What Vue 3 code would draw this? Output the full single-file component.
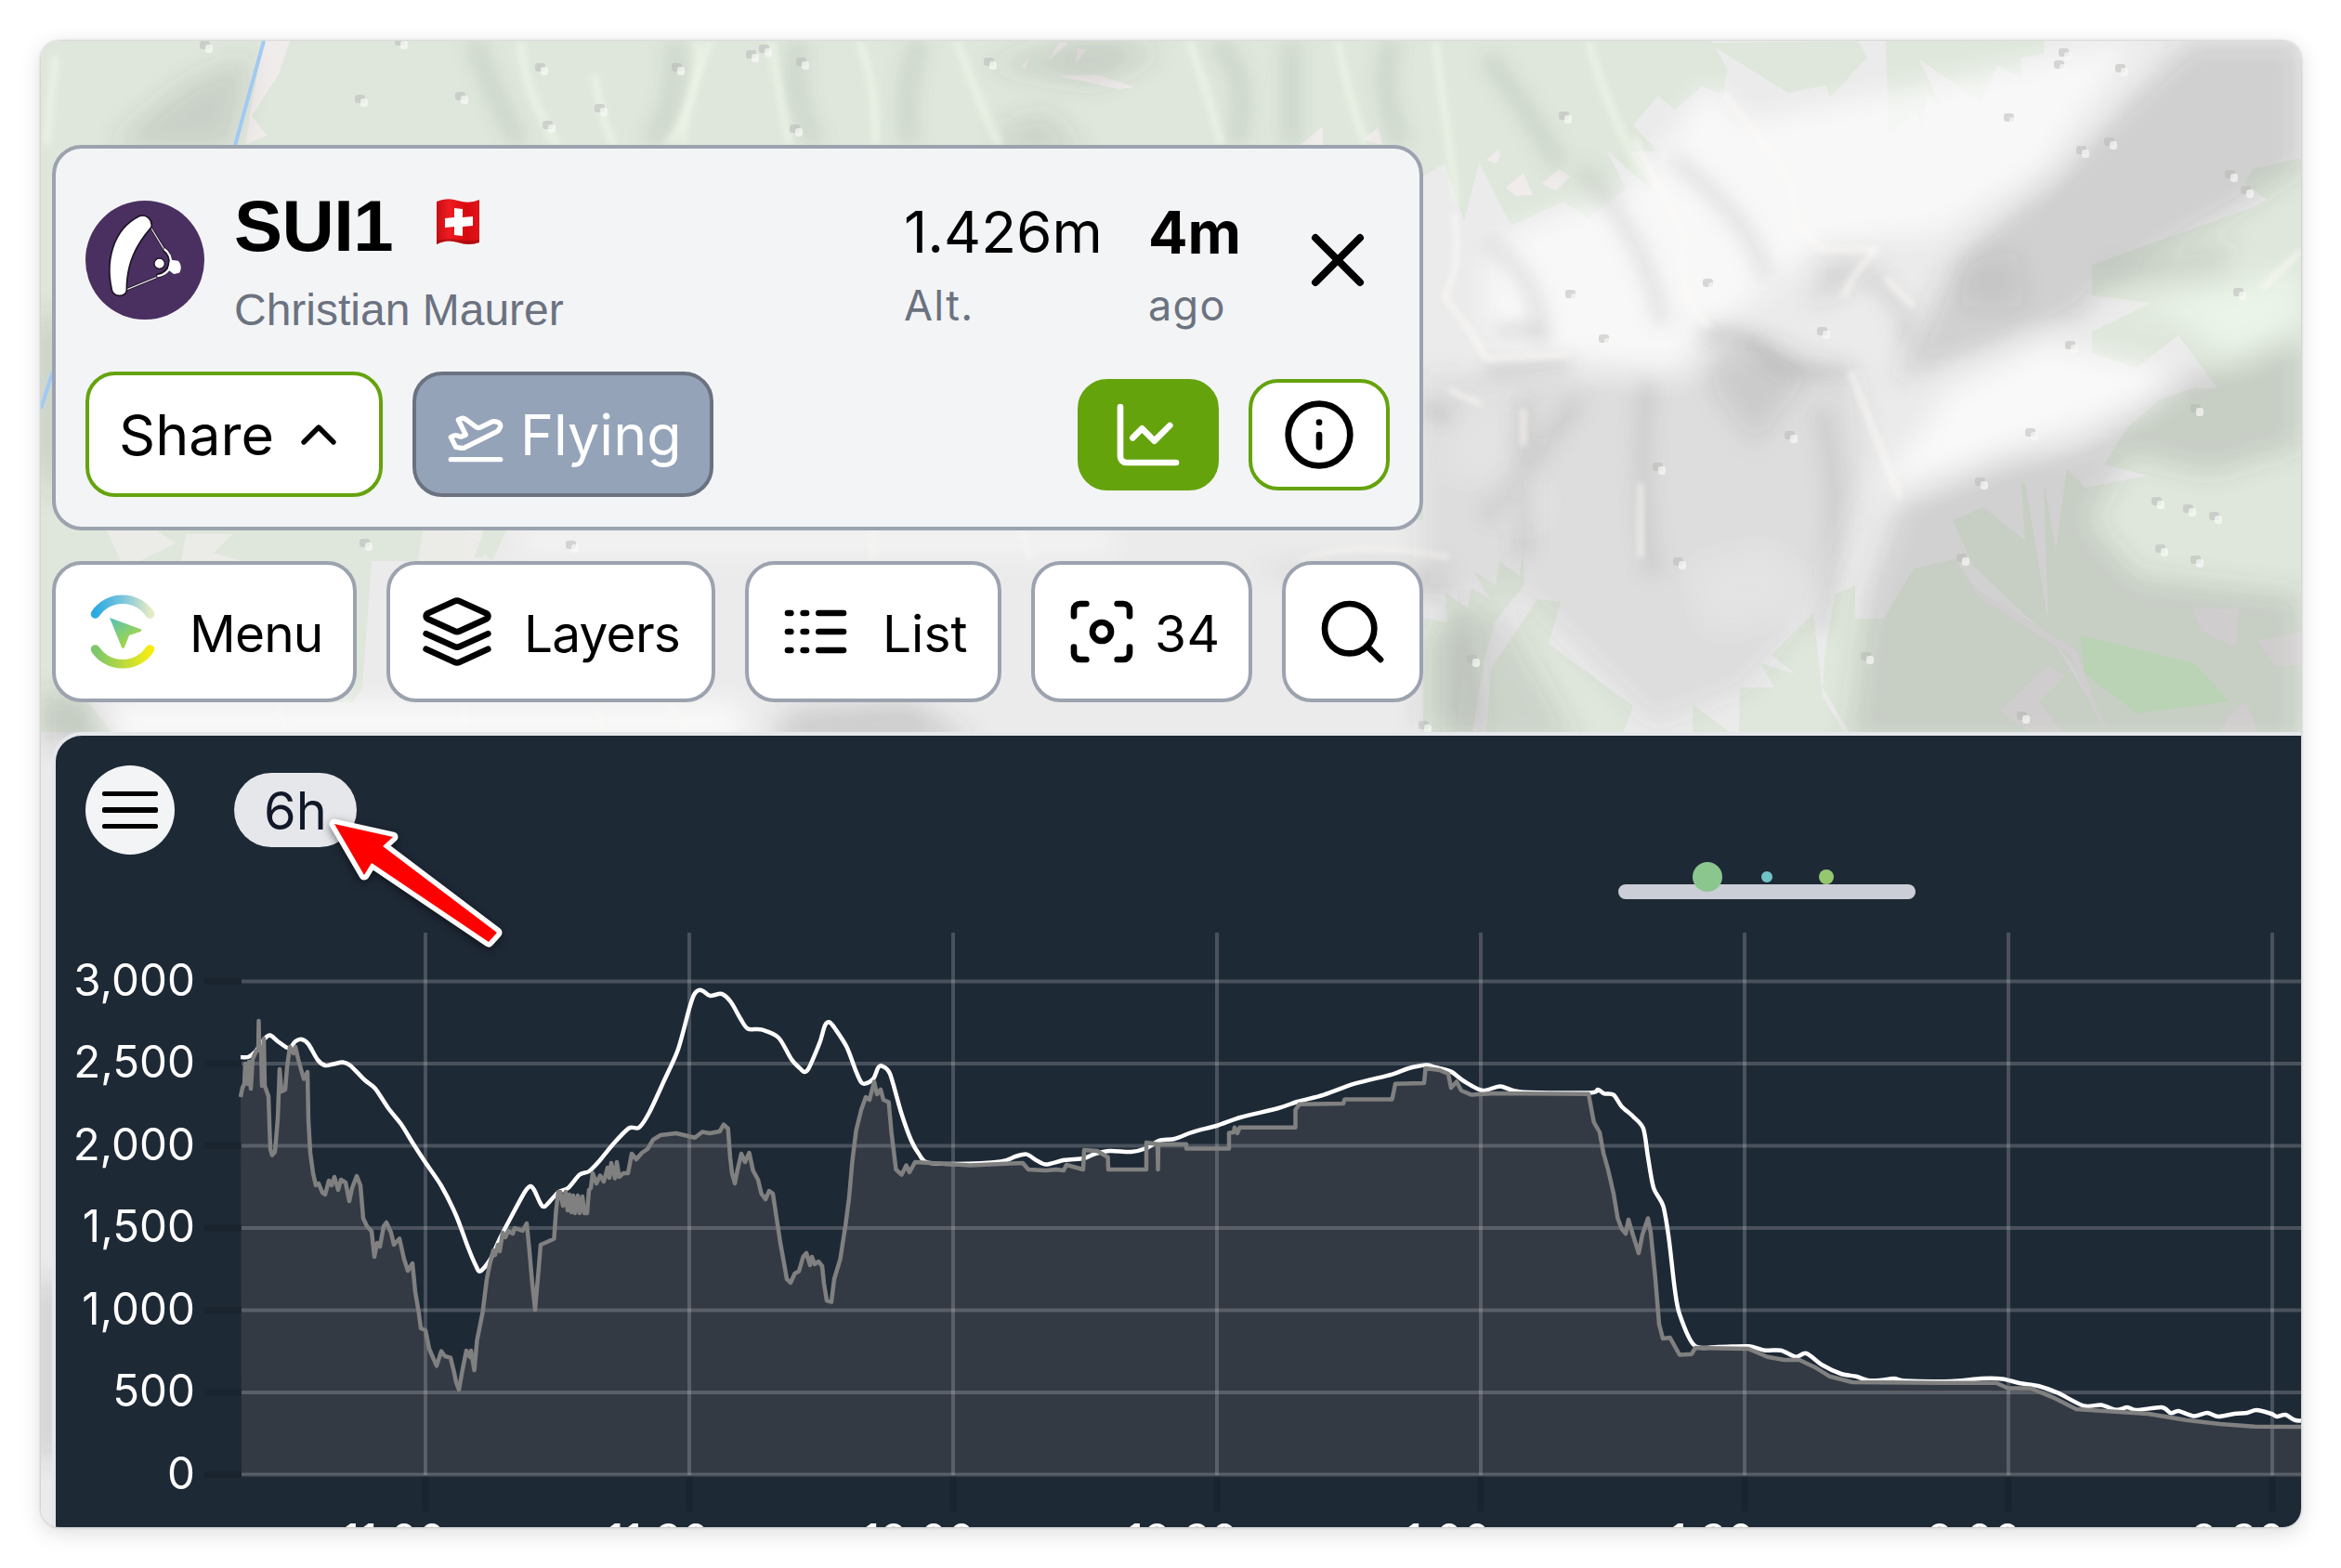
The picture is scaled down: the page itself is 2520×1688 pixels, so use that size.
<template>
  <div class="frame">
    <svg class="map" viewBox="44 44 2433 1600" preserveAspectRatio="none">
      <defs>
        <filter id="soft" x="-20%" y="-20%" width="140%" height="140%"><feGaussianBlur stdDeviation="14" /></filter>
        <filter id="soft-md" x="-20%" y="-20%" width="140%" height="140%"><feGaussianBlur stdDeviation="9" /></filter>
        <filter id="soft-sm" x="-20%" y="-20%" width="140%" height="140%"><feGaussianBlur stdDeviation="3" /></filter>
      </defs>
      <rect x="44" y="44" width="2433" height="1600" fill="#ebebeb" />

      <!-- 森林 -->
      <g fill="#dfe7dc">
        <path d="M44 44H1842L1860 75 1848 118 1858 90 1850 100 1832 93 1803 118 1785 103 1758 135 1785 163 1755 163 1778 205 1730 162 1750 204 1709 235 1683 217 1627 243 1592 175 1576 238 1555 176 1532 190V560H44Z" />
        <path d="M44 560H505L500 590 535 575 520 600 470 604H400L390 740 380 756H44ZM520 571H545L530 604 515 590Z" />
        <path d="M1838 46 1925 100 1966 92 1970 105 2010 62 2000 44ZM2030 44 2033 145 2062 122 2070 137 2074 100 2090 115 2064 60V44ZM2064 62 2132 110 2150 70 2176 84V62L2200 58V44H2060Z" />
        <path d="M2477 170 2425 182 2416 197 2440 215 2420 225 2252 285V318L2316 326 2252 357V380L2300 396 2345 361 2387 418H2360L2325 430 2290 460 2265 500 2312 512 2245 525 2225 505 2213 592 2200 520 2205 670 2180 520 2176 520 2180 582 2135 546 2102 560 2125 610 2210 690 2235 720 2270 788H2477Z" />
        <path d="M1532 665 1558 670 1556 638 1580 655 1584 633 1604 645 1586 615 1610 630 1614 604 1636 620 1639 595 1641 630 1610 668 1598 710 1585 788H1532ZM1655 645 1680 648 1667 693 1758 760 1748 788H1600L1605 720ZM1872 788 1873 740H1910L1895 714 1932 725 1907 705 1952 660 1962 750 1985 788ZM1990 788 1962 740 1965 700 1975 640 1997 630V666H2028L2060 612 2105 602 2130 640 2210 690 2270 788ZM1822 788V758L1862 788Z" />
        <path d="M44 756H95L120 788H44Z" />
      </g>
      <g fill="#efeceb">
        <path d="M284 44H312L300 80 271 125 287 146 264 156 270 120Z" />
        <path d="M110 560 152 560 190 585 150 604H130ZM200 575H250L230 595 260 604H195ZM455 571H520L510 604H450Z" opacity="0.7" />
        <path d="M1621 202 1640 186 1650 210 1632 211ZM1660 198 1678 182 1690 190 1675 205ZM1600 172 1612 162 1616 166 1610 176ZM1140 82 1180 80 1222 94 1205 96ZM1400 156 1424 136V156ZM1468 150 1484 137 1488 156ZM1100 72 1108 60 1104 74ZM1128 66 1140 46H1150ZM1158 68 1160 52 1170 54Z" />
      </g>
      <path d="M2240 684 2362 714 2400 755 2300 768 2244 725Z" fill="#cfeec9" />
      <g fill="#e9e6e6">
        <path d="M2205 716 2223 728 2195 755 2220 788H2185L2153 765ZM2360 655H2410L2407 697 2370 680ZM2430 690 2477 680V715L2450 718ZM2400 770 2418 755 2430 788H2390Z" />
        <path d="M2104 603 2125 632 2235 700 2248 735 2265 788 2240 735 2228 705 2130 643Z" />
      </g>

      <!-- 山体阴影 -->
      <g filter="url(#soft)">
        <g fill="#fcfcfc">
          <path d="M1600 260 1760 200 1840 90 1880 130 2300 44 2200 180 2090 250 1960 265 1850 350 1800 400 1600 370Z" opacity="0.75" />
          <path d="M2020 530 2100 420 2200 370 2340 400 2310 430 2200 470Z" opacity="0.8" />
          <path d="M2280 330 2477 290V350L2400 385 2340 340Z" fill="#f0faec" opacity="0.7" />
          <path d="M120 756H800V800H120Z" opacity="0.8" />
          <path d="M560 571H1200V595H560Z" opacity="0.6" />
          <path d="M1830 620 1900 600 1940 640 1850 670ZM1620 520 1660 540 1640 560ZM1560 500 1620 420 1610 500Z" opacity="0.5" />
        </g>
        <g fill="#4a4a4a">
          <path d="M2360 44H2477V180L2400 230 2270 300 2240 340 2130 380 2040 410 2070 350 2110 270 2210 190 2290 110Z" opacity="0.17" />
          <path d="M1530 405 1820 400 1900 370 2000 400 2010 520 1960 640 1880 740 1780 780 1640 640 1530 640Z" opacity="0.09" />
          <path d="M2045 540 2160 490 2240 480 2340 410 2477 360V480L2380 510 2290 490 2250 560 2300 620 2477 640V800H1990L2010 640Z" opacity="0.16" />
          <path d="M1820 350 1890 355 1950 400 1890 480 1850 430Z" opacity="0.11" />
          <path d="M1960 275 2025 272 2010 290 1950 330Z" opacity="0.16" />
          <path d="M2110 280 2170 270 2180 330 2110 330Z" opacity="0.08" />
          <path d="M2260 290 2400 260 2400 300 2270 315Z" opacity="0.12" />
          <path d="M1340 610H1560V800H1700L1620 660Z" opacity="0.12" />
          <path d="M850 765 980 755 1050 800H830Z" opacity="0.2" />
          <path d="M150 130 200 90 270 60 250 160H120Z" opacity="0.15" />
          <path d="M44 340 60 340 60 540 44 500Z" opacity="0.25" />
          <path d="M1060 70 1180 40 1250 55 1180 90Z" opacity="0.16" />
          <path d="M1080 130 1130 120 1170 170H1080Z" opacity="0.12" />
          <path d="M44 745 90 750 130 800H44Z" opacity="0.18" />
          <path d="M1530 690 1580 650 1600 788H1530Z" opacity="0.12" />
          <path d="M44 1380H60V1570H44Z" opacity="0.28" />
        </g>
      </g>
      <g filter="url(#soft-md)" fill="none" stroke-width="22">
        <g stroke="#7f897f" opacity="0.16">
          <path d="M510 44Q530 100 560 156M725 44Q735 100 700 156M990 44Q970 100 980 156M1310 44Q1350 90 1330 156M860 44Q850 110 880 156M1500 44Q1480 90 1510 156M1600 60Q1640 110 1680 180M1390 44V156" />
        </g>
        <g stroke="#808080" opacity="0.14">
          <path d="M1700 180Q1770 250 1790 350M1800 170Q1890 240 1900 300M1600 260Q1660 300 1660 370M2010 300Q2060 330 2050 370M1640 430V600M1775 410Q1760 500 1780 620M1700 430 1600 560M1960 440Q1990 560 1960 680" />
        </g>
        <g stroke="#707070" opacity="0.2" stroke-width="14">
          <path d="M1532 435Q1545 450 1560 445M1610 355H1660M1600 400 1690 392M1835 360Q1880 355 1900 380T1990 400" />
        </g>
      </g>
      <g filter="url(#soft-sm)" fill="none">
        <g stroke="#eef6ea" stroke-width="9">
          <path v-for="d in ridges" :key="d" :d="d" opacity="0.6" />
        </g>
        <g stroke="#fffbf8" stroke-width="5" opacity="0.75">
          <path d="M1855 100Q1895 150 1920 180Q1935 220 1935 240L1960 268H2020Q1990 300 1985 320M1760 150 1790 210 1812 250Q1805 320 1840 352M1992 400 2045 535M1565 230Q1575 280 1555 320Q1580 350 1600 386L1690 382M2030 300 2060 330M2435 310 2477 270M1766 520V600M1640 440V480M1560 420 1595 435" />
          <path d="M1560 600Q1450 580 1400 604M940 571V604M1100 571 1110 604M500 760V788M640 756 650 788M300 760 310 788M720 756 740 788" opacity="0.7" />
        </g>
      </g>

      <g fill="none" stroke="#a1c9f4" stroke-width="4">
        <path d="M284 44 252 160M57 400 44 440" />
      </g>
      <g v-for="(p, i) in bumps" :key="i">
        <rect :x="p[0] - 7" :y="p[1] - 6" width="11" height="9" rx="3" fill="#b4b8b3" opacity="0.5" />
        <rect :x="p[0] - 1" :y="p[1] - 2" width="8" height="9" rx="3" fill="#f8faf7" opacity="0.7" />
      </g>
    </svg>

    <div class="content">
      <section class="card">
        <header class="card-head">
          <svg class="avatar" viewBox="276 648 384 384">
            <circle cx="468" cy="840" r="192" fill="#4a3060" />
            <path d="M489 738 530 805M410 935 505 896" stroke="#1c1424" stroke-width="9" fill="none" />
            <path d="M489 738 530 805M410 935 505 896" stroke="#e4e0e8" stroke-width="4" fill="none" />
            <path d="M452 697C472 692 494 708 489 734C440 790 408 850 409 940C402 960 372 960 362 940C340 850 360 742 452 697Z" fill="#fff" stroke="#1c1424" stroke-width="5" />
            <path d="M528 804C560 826 560 880 506 892" stroke="#1c1424" stroke-width="14" fill="none" />
            <path d="M530 804C564 826 560 884 508 892" stroke="#fff" stroke-width="7" fill="none" />
            <circle cx="515" cy="851" r="17" fill="#fff" stroke="#1c1424" stroke-width="4" />
            <path d="M552 842 574 845Q586 860 578 878L562 882 546 870Z" fill="#fff" stroke="#fff" stroke-width="6" stroke-linejoin="round" />
          </svg>
          <div class="pilot">
            <div class="pilot-name">
              <span class="code">SUI1</span>
              <svg class="flag" viewBox="0 0 48 52">
                <defs>
                  <linearGradient id="flag-red" x1="0" x2="1">
                    <stop offset="0" stop-color="#c90f14" />
                    <stop offset="0.3" stop-color="#ee1c22" />
                    <stop offset="0.7" stop-color="#d80a0f" />
                    <stop offset="1" stop-color="#e0141a" />
                  </linearGradient>
                </defs>
                <path d="M1 4Q12-1 24 3T47 2V48Q36 52 24 48T1 50Z" fill="url(#flag-red)" />
                <path d="M1 46Q12 43 24 45T47 45V48Q36 52 24 48T1 50Z" fill="#8a0a0e" opacity="0.5" />
                <path d="M20 11 29 12V21L40 20V30L29 31V41L20 40V31L10 32V22L20 21Z" fill="#fff" />
              </svg>
            </div>
            <div class="pilot-full">Christian Maurer</div>
          </div>
          <div class="stat stat-alt">
            <div class="stat-value">1.426m</div>
            <div class="stat-label">Alt.</div>
          </div>
          <div class="stat stat-ago">
            <div class="stat-value bold">4m</div>
            <div class="stat-label">ago</div>
          </div>
          <button class="close">
            <svg class="icon close-icon" viewBox="0 0 24 24"><path d="M18 6 6 18M6 6l12 12" /></svg>
          </button>
        </header>
        <div class="actions">
          <button class="btn share">
            <span>Share</span>
            <svg class="icon icon-sm" viewBox="0 0 24 24"><path d="m18 15-6-6-6 6" /></svg>
          </button>
          <button class="btn flying">
            <svg class="icon icon-sm" viewBox="0 0 24 24">
              <path d="M2 22h20" />
              <path d="M6.36 17.4 4 17l-2-4 1.1-.55a2 2 0 0 1 1.8 0l.17.1a2 2 0 0 0 1.8 0L8 12 5 6l.9-.45a2 2 0 0 1 2.09.2l4.02 3a2 2 0 0 0 2.1.2l4.19-2.06a2.41 2.41 0 0 1 1.73-.17L21 7a1.4 1.4 0 0 1 .87 1.99l-.38.76c-.23.46-.6.84-1.07 1.08L7.58 17.2a2 2 0 0 1-1.22.18Z" />
            </svg>
            <span>Flying</span>
          </button>
          <button class="square filled">
            <svg class="icon" viewBox="0 0 24 24"><path d="M3 3v16a2 2 0 0 0 2 2h16" /><path d="m19 9-5 5-4-4-3 3" /></svg>
          </button>
          <button class="square">
            <svg class="icon" viewBox="0 0 24 24"><circle cx="12" cy="12" r="10" /><path d="M12 16v-4M12 8h.01" /></svg>
          </button>
        </div>
      </section>

      <nav class="toolbar">
        <button class="tool menu">
          <svg class="logo" viewBox="0 0 80 80">
            <defs>
              <linearGradient id="logo-top" x1="0" x2="1"><stop offset="0" stop-color="#29abe2" /><stop offset="0.5" stop-color="#7cc4de" /><stop offset="1" stop-color="#e3ebc4" /></linearGradient>
              <linearGradient id="logo-bottom" x1="0" x2="1"><stop offset="0" stop-color="#7ac76c" /><stop offset="1" stop-color="#f7ec13" /></linearGradient>
              <linearGradient id="logo-arrow" x1="0" x2="0.7" y2="1"><stop offset="0" stop-color="#52c1b8" /><stop offset="1" stop-color="#b4d936" /></linearGradient>
            </defs>
            <path d="M10.5 21A35.5 35.5 0 0 1 69.5 21" fill="none" stroke="url(#logo-top)" stroke-width="9.5" stroke-linecap="round" />
            <path d="M10.5 59A35.5 35.5 0 0 0 69.5 59" fill="none" stroke="url(#logo-bottom)" stroke-width="9.5" stroke-linecap="round" />
            <path d="M26 25 60 37.5Q61 39 59 40L47 44 42 57Q40 59 39 57Z" fill="url(#logo-arrow)" />
          </svg>
          <span>Menu</span>
        </button>
        <button class="tool layers">
          <svg class="icon" viewBox="0 0 24 24">
            <path d="m12.83 2.18a2 2 0 0 0-1.66 0L2.6 6.08a1 1 0 0 0 0 1.83l8.58 3.91a2 2 0 0 0 1.66 0l8.58-3.9a1 1 0 0 0 0-1.83Z" />
            <path d="m22 17.65-9.17 4.16a2 2 0 0 1-1.66 0L2 17.65" />
            <path d="m22 12.65-9.17 4.16a2 2 0 0 1-1.66 0L2 12.65" />
          </svg>
          <span>Layers</span>
        </button>
        <button class="tool list">
          <svg class="icon" viewBox="0 0 24 24"><path d="M13 12h8M13 18h8M13 6h8M3 12h1M3 18h1M3 6h1M8 12h1M8 18h1M8 6h1" /></svg>
          <span>List</span>
        </button>
        <button class="tool count">
          <svg class="icon" viewBox="0 0 24 24">
            <circle cx="12" cy="12" r="3" />
            <path d="M3 7V5a2 2 0 0 1 2-2h2M17 3h2a2 2 0 0 1 2 2v2M21 17v2a2 2 0 0 1-2 2h-2M7 21H5a2 2 0 0 1-2-2v-2" />
          </svg>
          <span>34</span>
        </button>
        <button class="tool search">
          <svg class="icon" viewBox="0 0 24 24"><circle cx="11" cy="11" r="8" /><path d="m21 21-4.3-4.3" /></svg>
        </button>
      </nav>

      <section class="panel">
        <div class="panel-head">
          <button class="burger"><i></i><i></i><i></i></button>
          <button class="range">6h</button>
        </div>
        <svg class="chart" viewBox="60 792 2417 852">
          <rect x="1742" y="952" width="320" height="16" rx="8" fill="#cbced6" />
          <circle cx="1838" cy="944" r="16" fill="#8cc68f" />
          <circle cx="1902" cy="944" r="6" fill="#72c3c4" />
          <circle cx="1966" cy="944" r="8" fill="#95c76f" />

          <path :d="terrainArea" fill="rgba(134, 119, 118, 0.22)" />
          <g stroke="rgba(229, 229, 229, 0.22)" stroke-width="4">
            <line v-for="y in yTicks" :key="y.label" x1="260" x2="2477" :y1="y.pos" :y2="y.pos" />
            <line v-for="x in xTicks" :key="x.label" :x1="x.pos" :x2="x.pos" y1="1004" y2="1588" />
          </g>
          <g stroke="rgba(0, 0, 0, 0.12)" stroke-width="7">
            <line v-for="y in yTicks" :key="y.label" x1="220" x2="260" :y1="y.pos" :y2="y.pos" />
            <line v-for="x in xTicks" :key="x.label" :x1="x.pos" :x2="x.pos" y1="1590" y2="1627" />
          </g>
          <path :d="altitudeLine" fill="none" stroke="#fff" stroke-width="4.5" stroke-linejoin="round" />
          <polyline :points="terrain" fill="none" stroke="#808080" stroke-width="4.5" stroke-linejoin="round" />
          <g class="axis">
            <text v-for="y in yTicks" :key="y.label" x="210" :y="y.pos + 15">{{ y.label }}</text>
            <text v-for="x in xTicks" :key="x.label" :x="x.end" y="1675">{{ x.label }}</text>
          </g>
        </svg>
      </section>
    </div>

    <svg class="pointer" viewBox="340 866 220 170">
      <path d="M360 887 423 901 412 911 535 1004 526 1014 400 929 392 942Z" />
    </svg>
  </div>
</template>

<script setup>
const yTicks = ['3,000', '2,500', '2,000', '1,500', '1,000', '500', '0'].map((label, i) => ({
  label,
  pos: 1056.5 + i * 88.5,
}));

const xTicks = [
  { label: '11:00', pos: 458, end: 480 },
  { label: '11:30', pos: 742, end: 764 },
  { label: '12:00', pos: 1026, end: 1050 },
  { label: '12:30', pos: 1310, end: 1333 },
  { label: '1:00', pos: 1594, end: 1605 },
  { label: '1:30', pos: 1878, end: 1889 },
  { label: '2:00', pos: 2162, end: 2176 },
  { label: '2:30', pos: 2446, end: 2460 },
];

// 飞行高度
const altitude = `259,1138 267,1138 275,1132 285,1118 291,1114.5 299,1121 311,1128.5 318,1121 325,1119 332,1124
342,1141 350,1147 359,1145.5 369,1143.5 377,1147 393,1163 404,1172 418,1193 432,1210.5 444,1230 458,1251.5
475,1276.5 491,1308.5 503.5,1342 512,1362 517,1368.5 528,1355.5 538,1333.5 550.5,1309.5 565,1283 571,1277
575,1281 582,1296 586,1299 593,1292 601.5,1283 611.5,1279 624,1264.5 634,1261 645,1250 660.6,1231 677,1214.5
688,1213.7 699,1197.5 715.5,1162 730,1129.5 742,1085.6 747,1071 752,1066 757,1067 764.5,1072 777,1070 787,1079
797,1096.5 805,1107.5 819.6,1108.4 838,1117 852,1140.4 862,1151 866,1154 870,1151 875,1140.4 883,1120.7
888,1104 893,1100.5 899,1107.5 911.4,1127 921.6,1153.6 927,1165 931,1166.7 940,1161.5 945,1150 949,1147.4
958,1155.8 970,1197.5 981,1228 990,1243.5 998,1251.4 1028,1253 1077,1250.5 1093,1245 1105,1242.6 1115.5,1249
1126,1253.6 1146,1248.8 1166.5,1247 1179,1242 1195,1239 1217.6,1240 1234,1236 1248,1228 1264.5,1226 1280,1220
1290,1216.8 1311,1211.5 1335,1203 1376,1193 1396.5,1186 1425,1178.6 1458,1166.7 1498.6,1156.6 1515,1150.5
1535,1146.6 1545,1149 1562,1153.6 1576,1164 1596,1174 1615,1169.4 1637,1175.5 1711,1176.4 1720,1173
1727,1177.3 1737,1178.6 1745.5,1191 1758,1202 1769,1215 1774,1245.7 1780,1278.6 1790.4,1298.4 1796.5,1333.5
1802.6,1386 1808,1414.7 1824,1448.4 1850,1450 1882,1449.3 1900,1453.7 1917,1453.7 1933,1460.7 1944.5,1457
1961.6,1469.5 1982,1479 1998,1481.8 2010.6,1486 2023,1486 2039,1484 2051,1486.6 2100,1487 2133,1484
2155.5,1484.4 2174,1489 2194,1492 2215,1499.4 2243,1513.4 2261.6,1512.5 2278,1517.8 2290,1515 2300,1518
2327,1515 2337,1521.3 2345,1519 2361.6,1524.4 2376,1521 2388,1525 2405,1522 2419,1521 2429,1518 2445,1522
2451,1525 2460,1523 2470,1528.7 2477,1529.6`;

// 地面高度
const terrain = `259,1181 261,1171 263,1167 264,1145 267,1167 268,1143 270,1172 272,1140 276,1131 278,1131 278.5,1099
279,1127 281,1127 282,1169 284,1118 285,1169 289,1180 291,1237 293,1243.5 296,1240 299,1204 301,1151 303,1175
307,1173 309,1149 312,1127 316,1134 318,1127 321,1140 324,1151 327,1161.5 331,1154 332,1206 334,1241 337,1263
340,1276 343,1274 347,1284 350,1286 354,1271 357,1276 360,1267 364,1281 367,1270 372,1273 376,1293 379,1279
384,1266 388,1276 391,1311.5 395,1320 400,1325.6 403,1353 406,1338 409,1342 413,1320 416,1316 421,1327
424,1340 430,1333.5 435,1355.4 439,1368 444,1360 447,1390.5 451,1414.7 453,1430 458,1432 462,1452 470,1470.4
475,1454.6 479,1460 485,1461.6 489,1478 491,1488 494,1496 498,1474 502,1454 506,1461 507,1454 510.6,1475
513.5,1443 519.6,1412.5 524,1377 527,1362 531,1346 533,1351 536,1340 538,1347 541,1327 544,1332 547,1325
552,1328 554,1322 562.5,1325 567,1317 569.5,1342 573,1382 576,1410 580,1364 582,1340 589,1337 596.4,1333.5
598.6,1303 601,1283 603,1283 606,1298 609,1283 611,1303 613,1286 615,1305 617,1287 619,1306 622,1287 624,1306
627,1288 629,1306 632,1306 634,1281 636,1279 638,1263 642,1274 646,1265.5 650,1272 654,1257 656,1268
658,1252 662,1268.5 664,1251 666.5,1267 671,1263 676,1263 680,1242 685,1248 691,1241 697,1237 703,1227
711,1222 728,1220 748,1224.7 756,1218.5 764,1220 774.7,1218 779,1210.6 783.7,1215 786,1246 788,1263 791,1274
794,1259 798,1242 802,1251 806.5,1241 810.6,1260 816,1270 819.6,1285 824,1291 828,1282 832,1285 836,1311.5
840,1338 844,1360 847,1377 851,1381 855.5,1371 860,1368.6 864.5,1353 868,1349 872,1362 874,1353 877,1361
881,1358 885,1363 887,1382 890,1400 895,1401.5 898,1377 904.5,1355.4 910,1320 914,1289.6 917.5,1250
921.6,1217 927,1195 932,1181 936,1184 941,1164.5 944,1178 948,1173 951,1184 956.7,1186.5 959.6,1219
964.5,1259 970.6,1264.6 975.6,1254.5 979,1262 985,1251 1044,1254.5 1101,1252 1107,1259 1125.7,1260 1137,1259
1145,1260 1148,1254 1166,1259 1167,1238 1181,1239 1192.6,1245.7 1193,1259 1234,1259 1234,1230 1246,1231.7
1246.5,1259 1247,1231.7 1277,1231.7 1277,1236.5 1323,1236.5 1323,1219.4 1328,1219 1329,1213.7 1332,1220
1334.5,1213.7 1394.5,1213.7 1394.5,1195 1398.6,1188.7 1446,1188 1447.5,1183.4 1498.6,1183.4 1502,1166.7
1533,1166 1534.5,1150 1549.6,1152 1559,1156 1562,1171 1568,1164.5 1573,1174 1584,1178.6 1609,1177 1710,1177.7
1715.7,1208 1722,1219 1726,1241 1731,1259 1737,1285 1741.4,1311.5 1745.5,1322.5 1750,1328 1753,1313
1757.7,1329 1764,1349 1768,1329 1774,1311.5 1777,1327 1782,1377 1786,1425.6 1790,1441 1797.7,1440 1808,1458.5
1821,1457.7 1825,1451 1882,1452 1902.6,1460.7 1921,1464 1937,1464 1953.4,1471.7 1969.8,1481.8 1994,1488
2104,1488.8 2149,1488.8 2161.5,1494.5 2186,1494.5 2210.5,1504.6 2235,1517 2312.5,1522 2353,1528.7 2390,1533
2427,1535.7 2477,1536`;

const terrainArea = `M260,1588 L${terrain} L2477,1588Z`;

// 三次贝塞尔平滑
const smooth = (points) => {
  const p = points.split(/\s+/).map((s) => s.split(',').map(Number));
  let d = `M${p[0]}`;
  for (let i = 0; i < p.length - 1; i++) {
    const a = p[Math.max(i - 1, 0)];
    const b = p[i];
    const c = p[i + 1];
    const e = p[Math.min(i + 2, p.length - 1)];
    d += ` C${b[0] + (c[0] - a[0]) / 7},${b[1] + (c[1] - a[1]) / 7} ${c[0] - (e[0] - b[0]) / 7},${c[1] - (e[1] - b[1]) / 7} ${c}`;
  }
  return d;
};

const altitudeLine = smooth(altitude);

const ridges = [
  'M560 44Q565 100 600 156',
  'M765 44Q740 100 735 156',
  'M750 44Q760 90 720 156',
  'M830 44Q838 100 850 156',
  'M925 44Q945 100 942 156',
  'M1030 44Q1050 100 1075 156',
  'M1280 44Q1300 100 1315 156',
  'M1440 44Q1450 100 1470 156',
  'M1545 44Q1555 120 1568 220',
  'M1710 44Q1730 120 1770 190',
  'M640 80Q645 120 660 156',
  'M60 60Q55 100 50 156',
];

const bumps = [
  [222, 50], [432, 46], [583, 74], [730, 74], [389, 108], [497, 105], [647, 118], [591, 136], [810, 60], [824, 54],
  [864, 68], [1066, 68], [857, 140], [616, 588], [394, 586], [1685, 126], [2218, 71], [2223, 58], [2284, 75],
  [2164, 128], [2242, 163], [2272, 154], [2402, 189], [2419, 206], [1840, 306], [1692, 318], [1728, 366],
  [1963, 358], [2230, 373], [2411, 316], [1928, 470], [1786, 504], [2187, 467], [2365, 441], [2133, 520],
  [2323, 541], [2357, 549], [2385, 557], [2327, 592], [2365, 604], [1808, 606], [2113, 602], [2010, 708],
  [1586, 711], [1534, 782], [2178, 772],
];
</script>

<style>
body {
  margin: 0;
  background: #fff;
}
</style>

<style scoped>
.frame {
  position: relative;
  width: 2433px;
  height: 1600px;
  margin: 44px;
  overflow: hidden;
  border-radius: 20px;
  font-family: Inter, "Liberation Sans", sans-serif;
  color: #000;
  box-shadow: 0 0 3px rgba(0, 0, 0, 0.3), 0 6px 24px rgba(0, 0, 0, 0.14);
}

.map {
  position: absolute;
  inset: 0;
  width: 100%;
  height: 100%;
}

.content {
  position: relative;
  display: flex;
  flex-direction: column;
  padding: 112px 0 0 12px;
}

button {
  display: flex;
  align-items: center;
  box-sizing: border-box;
  margin: 0;
  padding: 0;
  border: 0;
  background: none;
  color: inherit;
  font: inherit;
}

.icon {
  flex: none;
  width: 80px;
  height: 80px;
  fill: none;
  stroke: currentColor;
  stroke-width: 2;
  stroke-linecap: round;
  stroke-linejoin: round;
}

.icon-sm {
  width: 64px;
  height: 64px;
}

.card {
  box-sizing: border-box;
  width: 1476px;
  height: 415px;
  padding: 0 32px;
  border: 4px solid #9ca3af;
  border-radius: 32px;
  background: #f3f4f6;
}

.card-head {
  display: flex;
  align-items: center;
  height: 240px;
}

.avatar {
  width: 128px;
  height: 128px;
  margin-right: 32px;
}

.pilot {
  font-family: "Liberation Sans", sans-serif;
}

.pilot-name {
  display: flex;
  align-items: center;
  height: 96px;
}

.code {
  width: 217px;
  font-size: 78px;
  font-weight: 700;
  line-height: 96px;
  letter-spacing: -0.6px;
}

.flag {
  width: 48px;
  height: 52px;
  margin-bottom: 7px;
}

.pilot-full {
  margin-top: 11px;
  font-size: 48px;
  line-height: 64px;
  color: #6b7280;
}

.stat {
  margin-top: 10px;
}

.stat-alt {
  width: 263px;
  margin-left: auto;
}

.stat-ago {
  width: 148px;
}

.stat-value {
  font-size: 62px;
  line-height: 72px;
}

.stat-value.bold {
  font-size: 63px;
  font-weight: 700;
}

.stat-label {
  margin-top: 15px;
  font-size: 45px;
  line-height: 56px;
  letter-spacing: 1.3px;
  color: #6b7280;
}

.close {
  justify-content: center;
  width: 112px;
}

.close-icon {
  width: 96px;
  height: 96px;
}

.actions {
  display: flex;
  align-items: center;
  gap: 32px;
  height: 135px;
}

.btn {
  gap: 16px;
  height: 135px;
  padding-left: 32px;
  border: 4px solid #65a30d;
  border-radius: 32px;
  background: #fff;
  font-size: 61px;
}

.share {
  width: 320px;
}

.flying {
  width: 324px;
  margin-right: auto;
  border-color: #6b7280;
  background: #94a3b8;
  color: #fff;
}

.square {
  justify-content: center;
  width: 152px;
  height: 120px;
  border: 4px solid #65a30d;
  border-radius: 32px;
  background: #fff;
}

.square.filled {
  background: #65a30d;
  color: #fff;
}

.toolbar {
  display: flex;
  gap: 32px;
  margin: 33px 0 32px;
}

.tool {
  gap: 32px;
  height: 152px;
  padding-left: 32px;
  border: 4px solid #9ca3af;
  border-radius: 32px;
  background: #fff;
  font-size: 55px;
}

.tool span {
  padding-top: 3px;
}

.menu {
  width: 328px;
  letter-spacing: -0.8px;
}

.layers {
  width: 354px;
  letter-spacing: -0.8px;
}

.list {
  width: 276px;
}

.count {
  gap: 17px;
  width: 238px;
  letter-spacing: 0.5px;
}

.search {
  width: 152px;
}

.logo {
  width: 80px;
  height: 80px;
}

.panel {
  position: relative;
  height: 852px;
  overflow: hidden;
  border: 4px solid #e5e7eb;
  border-width: 4px 0 0 4px;
  border-radius: 32px 0 0 0;
  background: #1e2936;
}

.panel-head {
  display: flex;
  align-items: center;
  gap: 64px;
  height: 96px;
  padding: 32px;
}

.burger {
  flex-direction: column;
  justify-content: center;
  gap: 12px;
  width: 96px;
  height: 96px;
  border-radius: 50%;
  background: #f3f4f6;
}

.burger i {
  width: 60px;
  height: 5.5px;
  border-radius: 2px;
  background: #000;
}

.range {
  justify-content: center;
  width: 132px;
  height: 80px;
  padding-top: 2px;
  border-radius: 40px;
  background: #e5e7eb;
  color: #111827;
  font-size: 56px;
}

/* 图表覆盖整个面板 */
.chart {
  position: absolute;
  inset: 0;
  width: 2417px;
  height: 852px;
}

.axis text {
  fill: #fff;
  font-size: 47.5px;
  text-anchor: end;
}

.pointer {
  position: absolute;
  left: 296px;
  top: 822px;
  width: 220px;
  height: 170px;
  filter: drop-shadow(0 3px 5px rgba(0, 0, 0, 0.5));
}

.pointer path {
  fill: #f00;
  stroke: #fff;
  stroke-width: 11;
  stroke-linejoin: round;
  paint-order: stroke;
}
</style>
